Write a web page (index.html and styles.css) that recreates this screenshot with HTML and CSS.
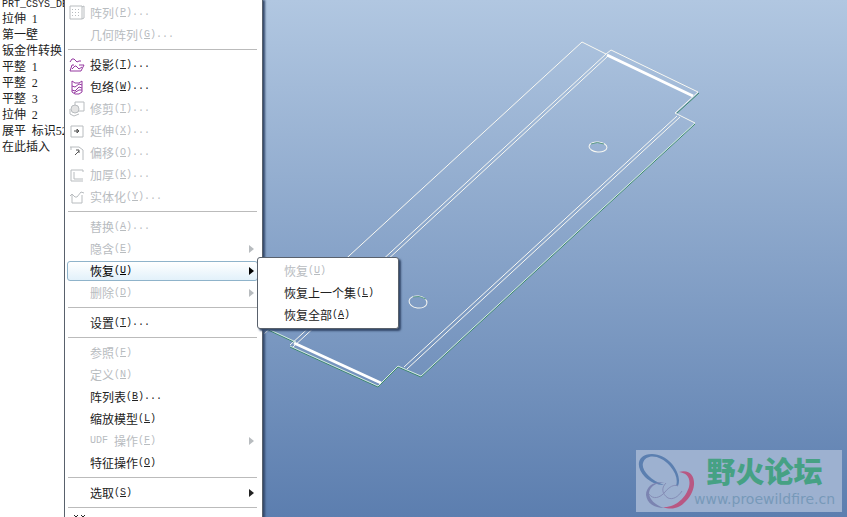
FILE: index.html
```
<!DOCTYPE html>
<html lang="zh-CN">
<head>
<meta charset="utf-8">
<title>模型</title>
<link rel="stylesheet" href="styles.css">
</head>
<body>
<div class="app">
  <aside class="side">
    <ul class="tree">
      <li><span class="lat">PRT_CSYS_DEF</span></li>
      <li>拉伸 <span class="num"> 1</span></li>
      <li>第一壁</li>
      <li>钣金件转换</li>
      <li>平整 <span class="num"> 1</span></li>
      <li>平整 <span class="num"> 2</span></li>
      <li>平整 <span class="num"> 3</span></li>
      <li>拉伸 <span class="num"> 2</span></li>
      <li>展平 <span class="num"> </span>标识<span class="num">52</span></li>
      <li>在此插入</li>
    </ul>
  </aside>
  <main class="canvas">
    <svg class="model" viewBox="262 0 585 517" preserveAspectRatio="xMinYMin meet" fill="none" aria-hidden="true">
      <g class="under">
        <path d="M699 93L676 114M695 124L421 377L398 367L378 387L290 347M264 328L296 343"/>
      </g>
      <g class="edge">
        <path d="M264 334L582 42L606 54L611 50L698 92L675 113L695 123"/>
        <path d="M606 54L290 345M608 56L293 347M677 116L404 367M680 117L407 369"/>
        <ellipse cx="598" cy="147" rx="9" ry="5" transform="rotate(5 598 147)"/>
        <ellipse cx="418" cy="302" rx="9" ry="6" transform="rotate(8 418 302)"/>
      </g>
      <path class="hole" d="M591 144Q597 141 604 144M413 297Q419 295 426 299"/>
      <path class="thin" d="M695 123L421 376L398 366L378 386L290 346M264 327L296 342"/>
      <path class="thick" d="M607 55L693 96M294 343L381 383"/>
    </svg>
    <div class="mark">
      <svg class="mark-logo" viewBox="0 0 60 60" fill="none" aria-hidden="true">
        <path d="M42 36C47 24 33 4 16 4C1 4-1 17 9 27C14 32 21 35 28 35C14 30 5 20 7 13C10 3 25 5 34 16C40 23 42 30 40 36Z" fill="#5b7fb0"/>
        <path d="M43 22C60 17 63 38 50 51C43 59 35 60 27 57C40 58 50 47 53 37C55 28 51 23 43 22Z" fill="#b85883"/>
        <path d="M30 33C19 30 10 36 10 45C11 53 18 58 28 58C19 55 13 49 13 43C14 36 21 32 30 33Z" fill="#7b84b1"/>
        <path d="M13 44C17 50 24 48 29 42C33 37 38 34 42 36M30 33C25 38 26 44 32 48C37 50 42 47 46 41" stroke="#858db6"/>
      </svg>
      <div class="mark-text"><strong>野火论坛</strong><span>www.proewildfire.cn</span></div>
    </div>
  </main>

  <nav class="menu main-menu">
    <button class="item" disabled><svg class="icon" viewBox="0 0 16 16"><path d="M1 1h12v13H1zM13 2l2-1v12l-2 1"/><path class="dots" d="M3 4.500h9M3 7.500h9M3 10.500h9"/></svg>阵列<span class="lat">(<u>P</u>)...</span></button>
    <button class="item" disabled>几何阵列<span class="lat">(<u>G</u>)...</span></button>
    <hr>
    <button class="item"><svg class="icon purple" viewBox="0 0 16 16"><path d="M1 5l2-3h2l3 3 2-1h2M3 8H5M10 8h5l-3 6H1l2-6M3 12l3-3h1l3 3 3-2"/></svg>投影<span class="lat">(<u>T</u>)...</span></button>
    <button class="item"><svg class="icon purple" viewBox="0 0 16 16"><path d="M3 2v11l3 2h4l3-2V2l-3 2H6L3 2M3 7l3 1 4-3 3 1M3 11l3 1 4-4 3 1M5 14l5-3h3"/></svg>包络<span class="lat">(<u>W</u>)...</span></button>
    <button class="item" disabled><svg class="icon" viewBox="0 0 16 16"><path d="M6 1h9v9H9M6 1v4"/><circle cx="6" cy="8" r="4" fill="#e4e4e4"/><path d="M1 8v5l4 2 5-2"/></svg>修剪<span class="lat">(<u>T</u>)...</span></button>
    <button class="item" disabled><svg class="icon" viewBox="0 0 16 16"><path d="M2 3h12v11H2z"/><path class="dark" d="M5 8h5M8 6l2 2-2 2z"/></svg>延伸<span class="lat">(<u>X</u>)...</span></button>
    <button class="item" disabled><svg class="icon" viewBox="0 0 16 16"><path d="M1 2h9l4 3v10M2 2v3"/><path class="dark" d="M6 10l4-4M7 5h3v3"/></svg>偏移<span class="lat">(<u>O</u>)...</span></button>
    <button class="item" disabled><svg class="icon" viewBox="0 0 16 16"><path d="M14 3H2v11h12M5 5v7h9M14 3v2"/></svg>加厚<span class="lat">(<u>K</u>)...</span></button>
    <button class="item" disabled><svg class="icon" viewBox="0 0 16 16"><path d="M3 6v8h10V6M1 7l2-2 3 3h2l4-5 3 1"/></svg>实体化<span class="lat">(<u>Y</u>)...</span></button>
    <hr>
    <button class="item" disabled>替换<span class="lat">(<u>A</u>)...</span></button>
    <button class="item sub" disabled>隐含<span class="lat">(<u>E</u>)</span></button>
    <button class="item sub open">恢复<span class="lat">(<u>U</u>)</span></button>
    <button class="item sub" disabled>删除<span class="lat">(<u>D</u>)</span></button>
    <hr>
    <button class="item">设置<span class="lat">(<u>T</u>)...</span></button>
    <hr>
    <button class="item" disabled>参照<span class="lat">(<u>F</u>)</span></button>
    <button class="item" disabled>定义<span class="lat">(<u>N</u>)</span></button>
    <button class="item">阵列表<span class="lat">(<u>B</u>)...</span></button>
    <button class="item">缩放模型<span class="lat">(<u>L</u>)</span></button>
    <button class="item sub" disabled><span class="lat">UDF </span>操作<span class="lat">(<u>F</u>)</span></button>
    <button class="item">特征操作<span class="lat">(<u>O</u>)</span></button>
    <hr>
    <button class="item sub">选取<span class="lat">(<u>S</u>)</span></button>
    <hr>
    <button class="item" aria-label="更多"><svg class="icon more" viewBox="0 0 16 16"><path d="M2 1l2 2 2-2M9 1l2 2 2-2"/></svg></button>
  </nav>

  <nav class="menu sub-menu">
    <button class="item" disabled>恢复<span class="lat">(<u>U</u>)</span></button>
    <button class="item">恢复上一个集<span class="lat">(<u>L</u>)</span></button>
    <button class="item">恢复全部<span class="lat">(<u>A</u>)</span></button>
  </nav>
</div>
</body>
</html>
```
FILE: styles.css
```
* { box-sizing: border-box; }

body {
  margin: 0;
  overflow: hidden;
  font: 12px/16px "Noto Sans CJK SC", sans-serif;
  color: #222;
}

.app {
  position: relative;
  display: flex;
  height: 100vh;
  overflow: hidden;
}

.lat {
  font-family: "Liberation Mono", monospace;
  font-size: 10px;
  white-space: pre;
}

.num {
  font-family: "Liberation Serif", serif;
  white-space: pre;
}

.side {
  flex: 0 0 262px;
  background: #fff;
}

.tree {
  margin: -6px 0 0;
  padding: 0 0 0 2px;
  list-style: none;
}

.tree li {
  height: 16px;
  white-space: nowrap;
}

.canvas {
  position: relative;
  flex: 1;
  background: linear-gradient(#b1c7e1, #5c7eaf);
}

.model {
  display: block;
  width: 100%;
  height: 100%;
}

.under { stroke: #3c8a6c; }
.hole { stroke: #5b9a86; }
.edge { stroke: #f8f8f2; }
.thin { stroke: #d2e9df; }
.thick { stroke: #fff; stroke-width: 3; }

.mark {
  position: absolute;
  right: 5px;
  bottom: 5px;
  display: flex;
  width: 206px;
  height: 62px;
  background: #9db1d0;
}

.mark-logo {
  flex: none;
  width: 60px;
  height: 60px;
}

.mark-text {
  display: flex;
  flex-direction: column;
  align-items: center;
  margin-left: -2px;
}

.mark-text strong {
  font-size: 29px;
  line-height: 40px;
  font-weight: 900;
  color: #46a184;
}

.mark-text span {
  font: 14px/18px "DejaVu Sans", sans-serif;
  color: #7799b9;
}

.menu {
  position: absolute;
  background: #fff;
  border: 1px solid #59616c;
}

.main-menu {
  left: 64px;
  top: 0;
  width: 199px;
  padding: 2px 4px 0 2px;
  border-width: 0 1px;
  box-shadow: 2px 0 2px #34496b;
}

.sub-menu {
  left: 257px;
  top: 257px;
  width: 142px;
  padding: 2px;
  border-radius: 3px;
  box-shadow: 2px 2px 2px #34496b;
}

.menu .item {
  position: relative;
  display: flex;
  align-items: center;
  width: 100%;
  height: 22px;
  padding: 0 0 0 22px;
  border: 1px solid transparent;
  border-radius: 3px;
  background: none;
  font: inherit;
  color: #222;
  white-space: nowrap;
}

.sub-menu .item { padding-left: 23px; }

.menu .item:disabled { color: #b8bcbf; }

.menu .open {
  height: 20px;
  margin: 1px 0;
  border-color: #8fb3ca;
  background: linear-gradient(#fff, #e2f1fa);
  color: #000;
}

.sub::after {
  content: "";
  margin-left: auto;
  border: 4px solid transparent;
  border-left: 5px solid currentColor;
  border-right: 0;
  margin-right: 3px;
}

hr {
  height: 1px;
  margin: 3px 1px 4px;
  border: 0;
  background: #bbb;
}

.icon {
  position: absolute;
  left: 1px;
  top: 2px;
  width: 16px;
  height: 16px;
  fill: none;
  stroke: #b8bcbf;
}

.menu .more { left: 4px; top: 3px; overflow: visible; }
.more { margin-top: -2px; }
.purple { stroke: #9538a0; }
.more { stroke: #222; }
.dark { stroke: #555; }
.dots { stroke-dasharray: 1 2; }
```
